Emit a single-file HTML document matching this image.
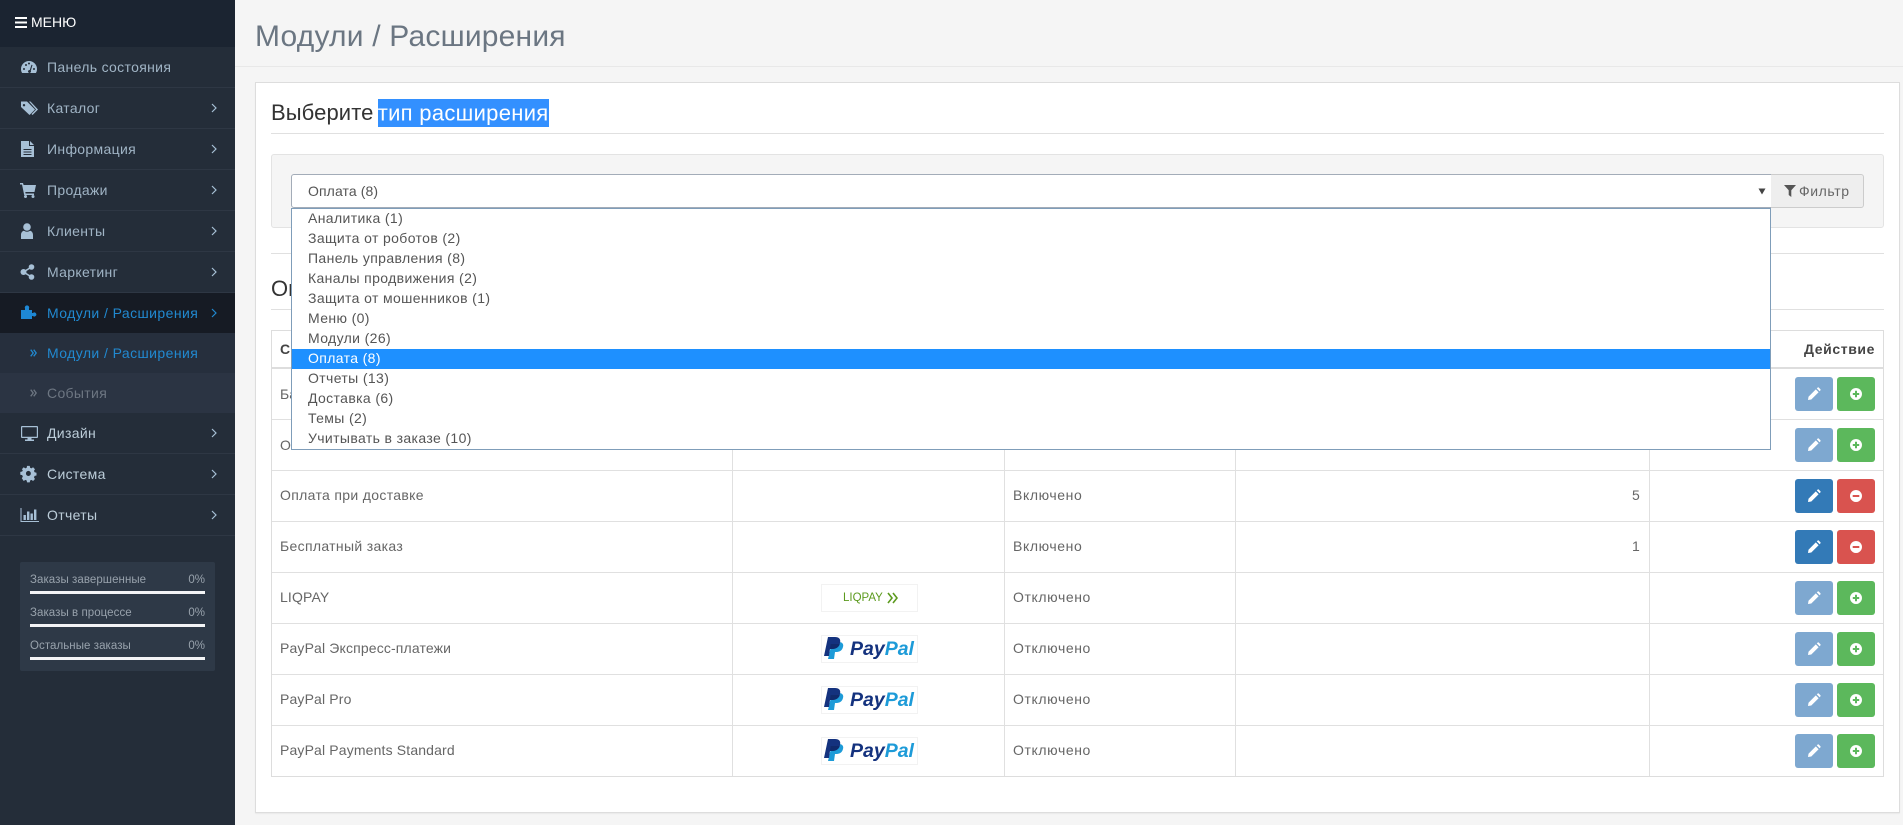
<!DOCTYPE html>
<html lang="ru"><head><meta charset="utf-8"><title>Модули / Расширения</title>
<style>
html,body{margin:0;padding:0;width:1903px;height:825px;overflow:hidden;background:#f5f5f5;font-family:"Liberation Sans","DejaVu Sans",sans-serif;font-size:14px;color:#666}
div,span,svg{position:absolute}
span.i{position:static}
.t{white-space:nowrap;line-height:20px;height:20px}
#side{left:0;top:0;width:235px;height:825px;background:#242d39}
.mi{left:0;width:235px;height:40px;border-bottom:1px solid #2e3744}
.mt{left:47px;top:10px;color:#a0b4c5;letter-spacing:.33px}
.ic{left:20px;top:11px;width:18px;height:18px;fill:#a7c0d6}
.ch{left:210px;top:14px;width:8px;height:12px;fill:none;stroke:#a7c0d6;stroke-width:1.2}
.st{left:30px;color:#98a2ac;font-size:11.5px;letter-spacing:.06px;line-height:14px;white-space:nowrap}
.sp{left:175px;width:30px;text-align:right;color:#98a2ac;font-size:11.5px;line-height:14px}
.bar{left:30px;width:175px;height:3px;background:#f3f4f6}
.hl{background:#e0e0e0}
.c{white-space:nowrap;line-height:20px}
.r{letter-spacing:.33px}
.s{letter-spacing:.6px}
.b{width:38px;height:34px;border-radius:3px}
.b svg{left:12px;top:10px;width:14px;height:14px}
.lg{left:821px;width:95px;height:26px;border:1px solid #f2f2f2;background:#fff;overflow:hidden}
.pp{font:italic bold 19.5px/26px "Liberation Sans",sans-serif;left:28px;top:0;white-space:nowrap;color:#14327e;letter-spacing:0}
.pp b{color:#1d9bd8}
.dd{left:16px;white-space:nowrap;line-height:20px;height:20px;color:#555;letter-spacing:.37px}
</style></head><body>

<div id="main" style="left:235px;top:0;width:1668px;height:825px;background:#f5f5f5"></div>
<div style="left:235px;top:66px;width:1668px;height:1px;background:#e8e8e8"></div>
<div class="t" style="left:255px;top:19px;height:36px;line-height:36px;font-size:30px;color:#6b7682;letter-spacing:.2px">Модули / Расширения</div>

<div style="left:255px;top:82px;width:1643px;height:729px;background:#fff;border:1px solid #ddd;box-shadow:0 1px 1px rgba(0,0,0,.05)"></div>

<div class="t" style="left:271px;top:99px;height:28px;line-height:28px;font-size:22px;color:#333;letter-spacing:.1px">Выберите <span class="i" style="background:#3390ff;color:#fff;margin-left:-2px;padding:1.500px 0;letter-spacing:.3px">тип расширения</span></div>
<div class="hl" style="left:271px;top:133px;width:1613px;height:1px"></div>

<div style="left:271px;top:154px;width:1611px;height:72px;background:#f5f5f5;border:1px solid #e3e3e3;border-radius:3px"></div>
<div class="hl" style="left:271px;top:253px;width:1613px;height:1px"></div>

<div class="t" style="left:271px;top:275px;height:28px;line-height:28px;font-size:22px;color:#333">Оплата</div>
<div class="hl" style="left:271px;top:309px;width:1613px;height:1px"></div>

<!-- table -->
<div style="left:271px;top:330px;width:1611px;height:445px;border:1px solid #ddd;background:#fff"></div>
<div style="left:272px;top:367px;width:1611px;height:2px;background:#ddd"></div>
<div class="hl" style="left:272px;top:419px;width:1611px;height:1px"></div>
<div class="hl" style="left:272px;top:470px;width:1611px;height:1px"></div>
<div class="hl" style="left:272px;top:521px;width:1611px;height:1px"></div>
<div class="hl" style="left:272px;top:572px;width:1611px;height:1px"></div>
<div class="hl" style="left:272px;top:623px;width:1611px;height:1px"></div>
<div class="hl" style="left:272px;top:674px;width:1611px;height:1px"></div>
<div class="hl" style="left:272px;top:725px;width:1611px;height:1px"></div>
<div class="hl" style="left:732px;top:331px;width:1px;height:445px"></div>
<div class="hl" style="left:1004px;top:331px;width:1px;height:445px"></div>
<div class="hl" style="left:1235px;top:331px;width:1px;height:445px"></div>
<div class="hl" style="left:1649px;top:331px;width:1px;height:445px"></div>

<div class="c" style="left:280px;top:339px;font-weight:bold;color:#444">Способ оплаты</div>
<div class="c" style="right:28px;top:339px;font-weight:bold;color:#444;letter-spacing:.6px">Действие</div>
<div class="c" style="left:280px;top:384px">Банковский перевод</div>
<div class="c" style="left:280px;top:435px">Оплата чеком</div>
<div class="c r" style="left:280px;top:485px">Оплата при доставке</div>
<div class="c r" style="left:280px;top:536px">Бесплатный заказ</div>
<div class="c" style="left:280px;top:587px;letter-spacing:.15px">LIQPAY</div>
<div class="c" style="left:280px;top:638px;letter-spacing:.15px">PayPal Экспресс-платежи</div>
<div class="c" style="left:280px;top:689px;letter-spacing:.15px">PayPal Pro</div>
<div class="c" style="left:280px;top:740px;letter-spacing:.15px">PayPal Payments Standard</div>

<div class="c s" style="left:1013px;top:485px">Включено</div>
<div class="c s" style="left:1013px;top:536px">Включено</div>
<div class="c s" style="left:1013px;top:587px">Отключено</div>
<div class="c s" style="left:1013px;top:638px">Отключено</div>
<div class="c s" style="left:1013px;top:689px">Отключено</div>
<div class="c s" style="left:1013px;top:740px">Отключено</div>
<div class="c" style="left:1632px;top:485px">5</div>
<div class="c" style="left:1632px;top:536px">1</div>

<!-- logos -->
<div class="lg" style="top:584px"><div style="left:21px;top:0;font-size:11.5px;line-height:26px;color:#5c9a1e;white-space:nowrap;letter-spacing:0">LIQPAY</div>
<svg style="left:65px;top:7px;width:11px;height:12px" viewBox="0 0 11 12" fill="none" stroke="#5c9a1e" stroke-width="1.600"><path d="M1 1l4 5-4 5M6 1l4 5-4 5"/></svg></div>

<div class="lg" style="top:635px"><svg style="left:2px;top:1px;width:20px;height:24px" viewBox="0 0 20 24"><path fill="#1d9bd8" d="M8 5h7c3 0 5 2 4 5-1 4-4 5-7 5h-1l-1 7H4z"/><path fill="#14327e" d="M4 0h7c4 0 6 2 5 6-1 4-4 6-8 6H6l-1 7H0z"/><path fill="#102a6b" d="M6.700 7h9c-.5 3-3.700 5-7.700 5H6z"/></svg><div class="pp">Pay<b>Pal</b></div></div>
<div class="lg" style="top:686px"><svg style="left:2px;top:1px;width:20px;height:24px" viewBox="0 0 20 24"><path fill="#1d9bd8" d="M8 5h7c3 0 5 2 4 5-1 4-4 5-7 5h-1l-1 7H4z"/><path fill="#14327e" d="M4 0h7c4 0 6 2 5 6-1 4-4 6-8 6H6l-1 7H0z"/><path fill="#102a6b" d="M6.700 7h9c-.5 3-3.700 5-7.700 5H6z"/></svg><div class="pp">Pay<b>Pal</b></div></div>
<div class="lg" style="top:737px"><svg style="left:2px;top:1px;width:20px;height:24px" viewBox="0 0 20 24"><path fill="#1d9bd8" d="M8 5h7c3 0 5 2 4 5-1 4-4 5-7 5h-1l-1 7H4z"/><path fill="#14327e" d="M4 0h7c4 0 6 2 5 6-1 4-4 6-8 6H6l-1 7H0z"/><path fill="#102a6b" d="M6.700 7h9c-.5 3-3.700 5-7.700 5H6z"/></svg><div class="pp">Pay<b>Pal</b></div></div>

<!-- buttons -->
<svg width="0" height="0" style="left:0;top:0"><defs>
<path id="pen" d="M1 13l.5-3.300L8.800 2.400l2.800 2.800L4.300 12.500zM9.800 1.400l.8-.8q.6-.6 1.200 0l1.600 1.600q.6.600 0 1.200l-.8.800z"/>
<path id="plus" fill-rule="evenodd" d="M7 1a6 6 0 1 0 .001 0zM6 3.800h2V6h2.200v2H8v2.200H6V8H3.800V6H6z"/>
<path id="minus" fill-rule="evenodd" d="M7 1a6 6 0 1 0 .001 0zM3.700 6h6.600v2H3.700z"/>
</defs></svg>

<div class="b" style="left:1795px;top:377px;background:#7ea8d0"><svg viewBox="0 0 14 14" fill="#fff"><use href="#pen"/></svg></div>
<div class="b" style="left:1837px;top:377px;background:#5cb85c"><svg viewBox="0 0 14 14" fill="#fff"><use href="#plus"/></svg></div>
<div class="b" style="left:1795px;top:428px;background:#7ea8d0"><svg viewBox="0 0 14 14" fill="#fff"><use href="#pen"/></svg></div>
<div class="b" style="left:1837px;top:428px;background:#5cb85c"><svg viewBox="0 0 14 14" fill="#fff"><use href="#plus"/></svg></div>
<div class="b" style="left:1795px;top:479px;background:#337ab7"><svg viewBox="0 0 14 14" fill="#fff"><use href="#pen"/></svg></div>
<div class="b" style="left:1837px;top:479px;background:#d9534f"><svg viewBox="0 0 14 14" fill="#fff"><use href="#minus"/></svg></div>
<div class="b" style="left:1795px;top:530px;background:#337ab7"><svg viewBox="0 0 14 14" fill="#fff"><use href="#pen"/></svg></div>
<div class="b" style="left:1837px;top:530px;background:#d9534f"><svg viewBox="0 0 14 14" fill="#fff"><use href="#minus"/></svg></div>
<div class="b" style="left:1795px;top:581px;background:#7ea8d0"><svg viewBox="0 0 14 14" fill="#fff"><use href="#pen"/></svg></div>
<div class="b" style="left:1837px;top:581px;background:#5cb85c"><svg viewBox="0 0 14 14" fill="#fff"><use href="#plus"/></svg></div>
<div class="b" style="left:1795px;top:632px;background:#7ea8d0"><svg viewBox="0 0 14 14" fill="#fff"><use href="#pen"/></svg></div>
<div class="b" style="left:1837px;top:632px;background:#5cb85c"><svg viewBox="0 0 14 14" fill="#fff"><use href="#plus"/></svg></div>
<div class="b" style="left:1795px;top:683px;background:#7ea8d0"><svg viewBox="0 0 14 14" fill="#fff"><use href="#pen"/></svg></div>
<div class="b" style="left:1837px;top:683px;background:#5cb85c"><svg viewBox="0 0 14 14" fill="#fff"><use href="#plus"/></svg></div>
<div class="b" style="left:1795px;top:734px;background:#7ea8d0"><svg viewBox="0 0 14 14" fill="#fff"><use href="#pen"/></svg></div>
<div class="b" style="left:1837px;top:734px;background:#5cb85c"><svg viewBox="0 0 14 14" fill="#fff"><use href="#plus"/></svg></div>

<!-- select + filter -->
<div style="left:291px;top:174px;width:1479px;height:32px;background:#fff;border:1px solid #a3acb8;border-radius:3px 0 0 3px"></div>
<div class="c" style="left:308px;top:181px;color:#555;letter-spacing:.1px">Оплата (8)</div>
<svg style="left:1758px;top:187px;width:8px;height:8px" viewBox="0 0 8 8"><path fill="#444" d="M.5 1.500h7L4 7.500z"/></svg>
<div style="left:1771px;top:174px;width:92px;height:32px;background:#eee;border:1px solid #ccc;border-left:0;border-radius:0 3px 3px 0"></div>
<svg style="left:1784px;top:185px;width:12px;height:12px" viewBox="0 0 12 12"><path fill="#555" d="M0 0h12L7.300 5.200V12L4.700 10V5.200z"/></svg>
<div class="c" style="left:1799px;top:181px;color:#666;letter-spacing:.6px">Фильтр</div>

<!-- dropdown -->
<div style="left:291px;top:208px;width:1478px;height:240px;background:#fff;border:1px solid #7f9db9">
<div style="left:0;top:140px;width:1478px;height:20px;background:#1e90ff"></div>
<div class="dd" style="top:-1px">Аналитика (1)</div>
<div class="dd" style="top:19px">Защита от роботов (2)</div>
<div class="dd" style="top:39px">Панель управления (8)</div>
<div class="dd" style="top:59px">Каналы продвижения (2)</div>
<div class="dd" style="top:79px">Защита от мошенников (1)</div>
<div class="dd" style="top:99px">Меню (0)</div>
<div class="dd" style="top:119px">Модули (26)</div>
<div class="dd" style="top:139px;color:#fff">Оплата (8)</div>
<div class="dd" style="top:159px">Отчеты (13)</div>
<div class="dd" style="top:179px">Доставка (6)</div>
<div class="dd" style="top:199px">Темы (2)</div>
<div class="dd" style="top:219px">Учитывать в заказе (10)</div>
</div>

<!-- sidebar -->
<div id="side">
<div style="left:0;top:0;width:235px;height:47px;background:#1b2431"></div>
<svg style="left:15px;top:17px;width:12px;height:11px" viewBox="0 0 12 11" fill="#fff"><path d="M0 0h12v2H0zM0 4.500h12v2H0zM0 9h12v2H0z"/></svg>
<div class="t" style="left:31px;top:12px;color:#fff;letter-spacing:0">МЕНЮ</div>

<div class="mi" style="top:47px"><svg class="ic" viewBox="0 0 18 18"><path fill-rule="evenodd" d="M9 3a8 8 0 0 1 8 8c0 1.500-.4 3-1.100 4H2.100C1.400 14 1 12.500 1 11a8 8 0 0 1 8-8zM8 13.500a1.500 1.500 0 1 0 2.800-.8L12.500 7 11.500 6.700 9.800 12a1.500 1.500 0 0 0-1.800 1.500zM4 10a1 1 0 1 0 .001 0zM6 6a1 1 0 1 0 .001 0zM9 4.500a1 1 0 1 0 .001 0zM14 10a1 1 0 1 0 .001 0z"/></svg><div class="t mt">Панель состояния</div></div>

<div class="mi" style="top:88px"><svg class="ic" viewBox="0 0 18 18"><path fill-rule="evenodd" d="M1 2.500h6l8 8-5.500 5.500-8.500-8zM4 5a1.200 1.200 0 1 0 .001 0z"/><path d="M9 2.500h1.500l7.500 8-5.500 5.500-1-1 4.500-4.500z"/></svg><div class="t mt">Каталог</div><svg class="ch" viewBox="0 0 8 12"><path d="M2 2l4 4-4 4"/></svg></div>

<div class="mi" style="top:129px"><svg class="ic" viewBox="0 0 18 18"><path fill-rule="evenodd" d="M1 1h8v5h5v11H1zM10 1l4 4h-4zM3.500 9v1h8V9zM3.500 11.500v1h8v-1zM3.500 14v1h8v-1z"/></svg><div class="t mt">Информация</div><svg class="ch" viewBox="0 0 8 12"><path d="M2 2l4 4-4 4"/></svg></div>

<div class="mi" style="top:170px"><svg class="ic" viewBox="0 0 18 18"><path d="M0 2h3l.6 2H16l-1.500 7H5.300l.3 1.500H14V14H4.200L2 3.500H0z"/><circle cx="5.500" cy="15.500" r="1.500"/><circle cx="13" cy="15.500" r="1.500"/></svg><div class="t mt">Продажи</div><svg class="ch" viewBox="0 0 8 12"><path d="M2 2l4 4-4 4"/></svg></div>

<div class="mi" style="top:211px"><svg class="ic" viewBox="0 0 18 18"><circle cx="7" cy="5" r="3.800"/><path d="M1 17v-4c0-2.500 1.500-4 3-4.200 1.800 1.300 4.200 1.300 6 0 1.500.2 3 1.700 3 4.200v4z"/></svg><div class="t mt">Клиенты</div><svg class="ch" viewBox="0 0 8 12"><path d="M2 2l4 4-4 4"/></svg></div>

<div class="mi" style="top:252px"><svg class="ic" viewBox="0 0 18 18"><circle cx="3.500" cy="9" r="3"/><circle cx="11.500" cy="4" r="2.800"/><circle cx="11.500" cy="14" r="2.800"/><path d="M3.500 9l8-5M3.500 9l8 5" stroke="#a7c0d6" stroke-width="1.600"/></svg><div class="t mt">Маркетинг</div><svg class="ch" viewBox="0 0 8 12"><path d="M2 2l4 4-4 4"/></svg></div>

<div style="left:0;top:293px;width:235px;height:40px;background:#161b24"><svg class="ic" style="fill:#1e88d4;top:10px" viewBox="0 0 18 18"><path d="M1 7h4V5.500a2.200 2.200 0 1 1 4 0V7h3v3h1a2 2 0 1 1 0 3h-1v3H1z"/></svg><div class="t mt" style="color:#2189d0;letter-spacing:.42px">Модули / Расширения</div><svg class="ch" style="stroke:#2189d0" viewBox="0 0 8 12"><path d="M2 2l4 4-4 4"/></svg></div>
<div style="left:0;top:333px;width:235px;height:40px;background:#262f3d"><svg style="left:30px;top:16px;width:7px;height:8px" viewBox="0 0 7 8" fill="none" stroke="#2189d0" stroke-width="1.300"><path d="M.7 .7l2.500 3.300-2.500 3.300M3.700 .7l2.500 3.300-2.500 3.300"/></svg><div class="t mt" style="left:47px;color:#2189d0;letter-spacing:.42px">Модули / Расширения</div></div>
<div style="left:0;top:373px;width:235px;height:40px;background:#2b3443"><svg style="left:30px;top:16px;width:7px;height:8px" viewBox="0 0 7 8" fill="none" stroke="#6d7682" stroke-width="1.300"><path d="M.7 .7l2.500 3.300-2.500 3.300M3.700 .7l2.500 3.300-2.500 3.300"/></svg><div class="t mt" style="left:47px;color:#6d7682">События</div></div>

<div class="mi" style="top:413px"><svg class="ic" viewBox="0 0 18 18"><path fill-rule="evenodd" d="M2 2h15a1 1 0 0 1 1 1v10a1 1 0 0 1-1 1h-5.500v1.500H14V17H5v-1.500h2.500V14H2a1 1 0 0 1-1-1V3a1 1 0 0 1 1-1zM2.200 3.200v9.600h14.600V3.200z"/></svg><div class="t mt" style="color:#bccdd9">Дизайн</div><svg class="ch" viewBox="0 0 8 12"><path d="M2 2l4 4-4 4"/></svg></div>

<div class="mi" style="top:454px"><svg class="ic" viewBox="0 0 18 18"><path fill-rule="evenodd" d="M6.500 1h3l.4 2 1.500.6L13.200 2.500l2.100 2.100-1.100 1.700.7 1.500 2.100.4v3l-2.100.4-.7 1.500 1.100 1.700-2.100 2.100-1.800-1.100-1.500.6-.4 2h-3l-.4-2-1.500-.6-1.800 1.100L.7 14l1.100-1.700L1.100 10.800 -1 10.400v-3l2.100-.4.7-1.500L.7 4.600 2.800 2.500l1.800 1.100 1.500-.6zM8 6.300a2.700 2.700 0 1 0 .001 0z" transform="translate(1.200 -.1) scale(.9 .95)"/></svg><div class="t mt" style="color:#bccdd9">Система</div><svg class="ch" viewBox="0 0 8 12"><path d="M2 2l4 4-4 4"/></svg></div>

<div class="mi" style="top:495px"><svg class="ic" viewBox="0 0 18 18" style="width:19px"><path d="M0 2h1v13h18v1H0zM3 9h2.400v5H3zM6.500 5.500h2.400V14H6.500zM10 7.500h2.400V14H10zM13.500 3.500h2.400V14h-2.400z"/></svg><div class="t mt" style="color:#bccdd9">Отчеты</div><svg class="ch" viewBox="0 0 8 12"><path d="M2 2l4 4-4 4"/></svg></div>

<div style="left:20px;top:562px;width:195px;height:109px;background:#2e3947;border-radius:2px"></div>
<div class="st" style="top:573px">Заказы завершенные</div><div class="sp" style="top:573px">0%</div><div class="bar" style="top:591px"></div>
<div class="st" style="top:606px">Заказы в процессе</div><div class="sp" style="top:606px">0%</div><div class="bar" style="top:624px"></div>
<div class="st" style="top:639px">Остальные заказы</div><div class="sp" style="top:639px">0%</div><div class="bar" style="top:657px"></div>
</div>
</body></html>
